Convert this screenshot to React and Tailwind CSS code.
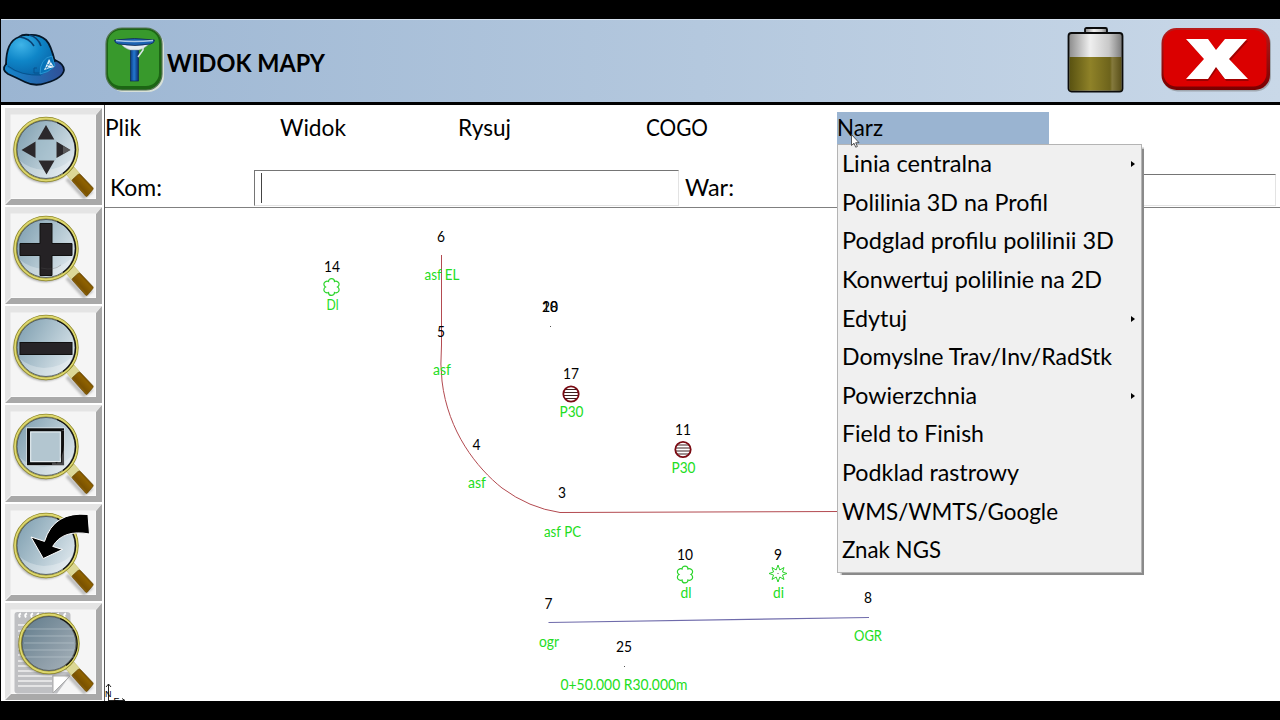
import React from 'react';

const menuItems = [
  { label: 'Linia centralna', width: 150, sub: true },
  { label: 'Polilinia 3D na Profil', width: 206 },
  { label: 'Podglad profilu polilinii 3D', width: 272 },
  { label: 'Konwertuj polilinie na 2D', width: 260 },
  { label: 'Edytuj', width: 65, sub: true },
  { label: 'Domyslne Trav/Inv/RadStk', width: 270 },
  { label: 'Powierzchnia', width: 135, sub: true },
  { label: 'Field to Finish', width: 142 },
  { label: 'Podklad rastrowy', width: 177 },
  { label: 'WMS/WMTS/Google', width: 216 },
  { label: 'Znak NGS', width: 99 },
];

const points = [
  { x: 441, y: 242, text: '6', w: 8 },
  { x: 332, y: 272, text: '14', w: 16 },
  { x: 441, y: 337, text: '5', w: 8 },
  { x: 550, y: 312, text: '20', w: 16 },
  { x: 550, y: 312, text: '18', w: 16 },
  { x: 571, y: 379, text: '17', w: 16 },
  { x: 683, y: 435, text: '11', w: 16 },
  { x: 476.5, y: 450, text: '4', w: 8 },
  { x: 562, y: 498, text: '3', w: 8 },
  { x: 685, y: 560, text: '10', w: 16 },
  { x: 778, y: 560, text: '9', w: 8 },
  { x: 548.5, y: 609, text: '7', w: 8 },
  { x: 868, y: 603, text: '8', w: 8 },
  { x: 624, y: 652, text: '25', w: 16 },
];

const codes = [
  { x: 442, y: 280, text: 'asf EL', w: 35 },
  { x: 332.5, y: 310, text: 'Dl', w: 12 },
  { x: 442, y: 375, text: 'asf', w: 18 },
  { x: 571.5, y: 417, text: 'P30', w: 24 },
  { x: 683.5, y: 473, text: 'P30', w: 24 },
  { x: 477, y: 488, text: 'asf', w: 18 },
  { x: 562.5, y: 537, text: 'asf PC', w: 37 },
  { x: 686, y: 598, text: 'dl', w: 11 },
  { x: 778.5, y: 598, text: 'di', w: 11 },
  { x: 549, y: 647, text: 'ogr', w: 20 },
  { x: 868, y: 641, text: 'OGR', w: 28 },
  { x: 624, y: 690, text: '0+50.000 R30.000m', w: 127 },
];

// Text stretched to a fixed width
function Label({ text, width, size = 24, bold = false }) {
  return (
    <svg className="block overflow-visible" width={width} height="32">
      <text x="0" y="24" fontSize={size} fontWeight={bold ? 700 : 400} textLength={width} lengthAdjust="spacingAndGlyphs">
        {text}
      </text>
    </svg>
  );
}

function Defs() {
  return (
    <svg className="absolute" width="0" height="0">
      <defs>
        <linearGradient id="lens" x1="0" y1="0.2" x2="1" y2="0.8">
          <stop offset="0" stopColor="#7f9fb0" />
          <stop offset="0.5" stopColor="#b0c5d0" />
          <stop offset="1" stopColor="#e3ebf0" />
        </linearGradient>
        <linearGradient id="lensDark" x1="0" y1="0" x2="1" y2="1">
          <stop offset="0" stopColor="#5e7a8a" />
          <stop offset="0.6" stopColor="#8d9da8" />
          <stop offset="1" stopColor="#a9b5bd" />
        </linearGradient>
        <linearGradient id="handle" x1="0.2" y1="0.8" x2="0.8" y2="0.2">
          <stop offset="0" stopColor="#a87b16" />
          <stop offset="0.35" stopColor="#7a5200" />
          <stop offset="0.7" stopColor="#8f6200" />
          <stop offset="1" stopColor="#4d3100" />
        </linearGradient>
        <filter id="soft" x="-20%" y="-20%" width="140%" height="140%">
          <feGaussianBlur stdDeviation="1.3" />
        </filter>
      </defs>
    </svg>
  );
}

function Lens({ cx = 41, cy = 42.5, r = 30, fill = 'url(#lens)', children }) {
  return (
    <g>
      <circle cx={cx - 1} cy={cy + 2} r={r + 1.5} fill="#555" opacity="0.55" filter="url(#soft)" />
      <path d="M62 72l17 18 8-6" fill="none" stroke="#999" strokeWidth="4" opacity="0.6" filter="url(#soft)" />
      <path d="M61 67l8-7 6 7-8 7z" fill="#dcd896" stroke="#c2ba62" strokeWidth="0.6" />
      <circle cx={cx} cy={cy} r={r + 1} fill={fill} stroke="#8d8727" strokeWidth="3.4" />
      <circle cx={cx} cy={cy} r={r + 1} fill="none" stroke="#ddd76f" strokeWidth="1.8" />
      <circle cx={cx} cy={cy} r={r - 1} fill="none" stroke="#4b5153" strokeWidth="0.8" />
      <path d={`M${cx + 11} ${cy - r + 3}A${r - 1} ${r - 1} 0 0 1 ${cx + 17} ${cy + r - 6}`} fill="none" stroke="#111" strokeWidth="1.3" />
      {children}
      <path d="M67.500 72.500l5.500-5q1.500-1 2.500 0L87.800 80.500q1 1.200 0 2.200l-5.300 6.300q-1 1-2 0L67.500 74.500q-.8-1 0-2z" fill="url(#handle)" stroke="#5f3f00" strokeWidth="0.6" />
    </g>
  );
}

function Shine() {
  return <path d="M14 53q10 9 25 10 16 0 28-11-4 12-15 17-21 5-32-7z" fill="#fff" opacity="0.28" />;
}

function ToolButton({ children }) {
  return (
    <button className="block h-[99.200px] w-[98px] shrink-0">
      <svg className="block" width="98" height="99.2" viewBox="0 0 98 99.2">
        <rect width="98" height="99.2" fill="#fff" />
        <path d="M0 1h97l-6.500 7H6v83l-6 6z" fill="#e4e4e4" />
        <path d="M97 1v97H0l6-6h85V8z" fill="#a9a9a9" />
        <rect x="5.500" y="7.500" width="85" height="84" fill="#f5f5f5" />
        {children}
      </svg>
    </button>
  );
}

function PanTool() {
  return (
    <ToolButton>
      <Lens>
        <Shine />
        <rect x="31" y="33" width="20" height="20" fill="#9fbccb" opacity="0.55" />
        <path d="M41 18l8.300 14.500H32.700zM41.500 67.500l8-14h-16zM16.500 43l14-8.500v16.500zM65.500 43l-14-8.500v16.500z" fill="#2b282b" />
        <path d="M58 39l7.500 4-7.500 4z" fill="#777" opacity="0.6" />
      </Lens>
    </ToolButton>
  );
}

function ZoomInTool() {
  return (
    <ToolButton>
      <Lens>
        <Shine />
        <path d="M35 17.500h12v20h20v12h-20v20h-12v-20h-20v-12h20z" fill="#252225" stroke="#101010" />
        <path d="M36 62q13 3 20-3" stroke="#555" fill="none" opacity="0.3" />
      </Lens>
    </ToolButton>
  );
}

function ZoomOutTool() {
  return (
    <ToolButton>
      <Lens>
        <Shine />
        <rect x="15" y="37.500" width="52" height="12" fill="#272427" stroke="#111" />
      </Lens>
    </ToolButton>
  );
}

function WindowTool() {
  return (
    <ToolButton>
      <Lens>
        <Shine />
        <rect x="23.500" y="25.800" width="34" height="34" fill="#a9bfca" stroke="#0c0c0c" strokeWidth="3.200" />
        <path d="M47 60h11V26" fill="none" stroke="#56585a" strokeWidth="2.500" opacity="0.8" />
        <path d="M58 27v14q0 10-7 18" fill="none" stroke="#0c0c0c" strokeWidth="1.800" />
        <rect x="25.700" y="28" width="29.600" height="29.600" fill="#b3c6d0" stroke="#e9f0f3" strokeWidth="1" />
        <rect x="21.500" y="23.800" width="38" height="38" fill="none" stroke="#e1e8eb" strokeWidth="0.700" />
      </Lens>
    </ToolButton>
  );
}

function PreviousTool() {
  return (
    <ToolButton>
      <Lens>
        <Shine />
        <path d="M83 11.500L84.500 31Q58 26 47.700 43.400L57.500 46.500 38.300 55.500 26 34l13.500 4.400Q49 8 83 11.500z" fill="#000" stroke="#fff" strokeWidth="1" />
      </Lens>
    </ToolButton>
  );
}

function NotesTool() {
  const lines = [23, 29, 35, 41, 47, 53, 59, 64, 69, 74, 79, 84];
  return (
    <ToolButton>
      <path d="M9.500 13q0-3 3-3h49q4 0 4 3v60L52 91.500H12.500q-3 0-3-3z" fill="#bfc0c3" />
      {lines.map((y) => (
        <path key={y} d={`M13 ${y}h${y > 71 ? 34 : 50}`} stroke="#f0f0f0" strokeWidth="1.400" />
      ))}
      {[15, 21, 27, 33, 39, 46, 53, 60].map((x) => (
        <path key={x} d={`M${x} 15.500q-2-3 1-4`} stroke="#fff" strokeWidth="2" fill="none" />
      ))}
      <path d="M48 74h17L48 91z" fill="#fff" stroke="#aaa" />
      <Lens cx={44} cy={41.500} r={28} fill="url(#lensDark)">
        {[27, 34, 41, 48, 55].map((y) => (
          <path key={y} d={`M19 ${y}h50`} stroke="#c4d0d6" strokeWidth="1" opacity="0.5" />
        ))}
      </Lens>
    </ToolButton>
  );
}

function HelmetIcon() {
  return (
    <svg className="block" width="66" height="58" viewBox="0 0 66 58">
      <defs>
        <radialGradient id="dome" cx="0.3" cy="0.25" r="0.8">
          <stop offset="0" stopColor="#3fb4e8" />
          <stop offset="0.5" stopColor="#0f86c8" />
          <stop offset="1" stopColor="#0964a8" />
        </radialGradient>
        <linearGradient id="brim" x1="0" y1="0" x2="1" y2="0">
          <stop offset="0" stopColor="#1587cc" />
          <stop offset="1" stopColor="#304f97" />
        </linearGradient>
      </defs>
      <path d="M4 31q-5 6 2 10 9 4 17 8 10 5 21 1 17-5 18-13 0-6-9-10z" fill="url(#brim)" stroke="#051525" strokeWidth="1.800" />
      <path d="M5 34C3 18 8 7 17 4q4-3 10-2 10-1 17 5 5 5 9 24-7 5-13 11Q20 44 5 34z" fill="url(#dome)" />
      <path d="M4 32C4 17 8 7 17 4q4-3 10-2 10-1 17 5 5 5 9 22" fill="none" stroke="#061728" strokeWidth="1.800" />
      <path d="M18 4q9 1 14 9M27 2q9 2 12 11" fill="none" stroke="#0a3f70" strokeWidth="1.600" />
      <path d="M6 33q13 10 33 9M35 35h-3v5h7" fill="none" stroke="#08538d" strokeWidth="1" />
      <path d="M38 41q0-16 12-18l3 10q-7 7-15 8z" fill="#0873b8" stroke="#35a5dc" strokeWidth="0.700" />
      <path d="M42 37l5-11 5 8z" fill="#eaf4fb" />
      <path d="M43 34l7 2M44.500 31l6 2M49 28l-5 8" stroke="#0873b8" strokeWidth="0.700" />
    </svg>
  );
}

function ReceiverIcon() {
  return (
    <svg className="block" width="60" height="66" viewBox="0 0 60 66">
      <defs>
        <linearGradient id="pole" x1="0" y1="0" x2="1" y2="0">
          <stop offset="0" stopColor="#0b3b86" />
          <stop offset="0.45" stopColor="#2478cf" />
          <stop offset="1" stopColor="#0a2f70" />
        </linearGradient>
      </defs>
      <rect x="3" y="3" width="56" height="62" rx="16" fill="#e5ead8" opacity="0.8" />
      <rect x="1" y="1" width="56" height="62" rx="16" fill="#1c6514" stroke="#547551" strokeWidth="1.200" />
      <rect x="3" y="3" width="51" height="56" rx="13" fill="#38992c" />
      <rect x="25.500" y="21" width="8" height="33" fill="url(#pole)" stroke="#112958" strokeWidth="0.700" />
      <path d="M16 17h28q-5 5-10 6h-9q-6-2-9-6z" fill="#e4ebf0" stroke="#7e939d" strokeWidth="0.500" />
      <path d="M9.500 13q20-3 40 0 0 3-4 4-15 3-32 0-4-1-4-4z" fill="#1c62b2" stroke="#102850" strokeWidth="0.800" />
      <path d="M11 13.500q18 2 37 0" stroke="#a9c7e5" fill="none" strokeWidth="1.300" />
      <path d="M38 19v4l-5 7" stroke="#dce6ed" fill="none" strokeWidth="1.500" />
    </svg>
  );
}

function BatteryIcon() {
  return (
    <svg className="block" width="58" height="67" viewBox="0 0 58 67">
      <defs>
        <linearGradient id="steel" x1="0" y1="0" x2="1" y2="0">
          <stop offset="0" stopColor="#8a8a8a" />
          <stop offset="0.4" stopColor="#efefef" />
          <stop offset="0.75" stopColor="#c8c8c8" />
          <stop offset="0.85" stopColor="#a9a9a9" />
          <stop offset="1" stopColor="#777" />
        </linearGradient>
        <linearGradient id="charge" x1="0" y1="0" x2="1" y2="0">
          <stop offset="0" stopColor="#595211" />
          <stop offset="0.4" stopColor="#8f8228" />
          <stop offset="0.78" stopColor="#6d631b" />
          <stop offset="0.82" stopColor="#857a3d" />
          <stop offset="1" stopColor="#5a501a" />
        </linearGradient>
      </defs>
      <rect x="18" y="1" width="22" height="5" rx="1.500" fill="url(#steel)" stroke="#0b0b0b" strokeWidth="1.800" />
      <rect x="1.500" y="6" width="54" height="58.500" rx="3" fill="url(#steel)" stroke="#0b0b0b" strokeWidth="1.800" />
      <path d="M2.500 30h52v33.500h-52z" fill="url(#charge)" />
    </svg>
  );
}

function CloseIcon() {
  return (
    <svg className="block" width="112" height="66" viewBox="0 0 112 66">
      <defs>
        <linearGradient id="redEdge" x1="0" y1="0" x2="0" y2="1">
          <stop offset="0" stopColor="#b81b1b" />
          <stop offset="1" stopColor="#790000" />
        </linearGradient>
      </defs>
      <rect x="1.500" y="2" width="108.500" height="62.500" rx="15" fill="#777" opacity="0.5" />
      <rect x="0.500" y="1" width="108.500" height="62" rx="15" fill="url(#redEdge)" />
      <rect x="2.500" y="3" width="103" height="56.500" rx="13" fill="#db0000" />
      <path d="M26 14h22l8 11 9-11h22L69 34l19 20H65l-9-12-9 12H25l20-21z" fill="#700" opacity="0.6" />
      <path d="M25 12h22l8 11 9-11h22L68 32l19 20H64L55 40l-8 12H25l18-20z" fill="#fff" />
    </svg>
  );
}

function Header() {
  return (
    <header className="flex h-[86px] shrink-0 items-start border-t border-b-3 border-t-[#d5e1ee] border-b-black bg-linear-to-r from-[#9bb5d2] to-[#c9d8e8] pr-[7px] pl-px">
      <div className="pt-[13px]"><HelmetIcon /></div>
      <div className="pt-[7px] pl-[37px]"><ReceiverIcon /></div>
      <div className="pt-[28px] pl-[2px]">
        <Label text="WIDOK MAPY" width={158} size={25.500} bold />
      </div>
      <div className="ml-auto pt-[7px]"><BatteryIcon /></div>
      <div className="pt-[7px] pl-[36px]"><CloseIcon /></div>
    </header>
  );
}

function MenuPopup() {
  return (
    <div className="absolute top-[32px] left-0 z-20 h-[429px] w-[305px] border border-[#b4b4b4] bg-[#f0f0f0] shadow-[2px_2px_1px_-0.5px_#8a8a8a]">
      {menuItems.map((item) => (
        <div key={item.label} className="flex h-[38.600px] items-center justify-between pr-[6px] pl-[3.500px]">
          <Label text={item.label} width={item.width} />
          {item.sub && (
            <svg width="4" height="6" viewBox="0 0 4 6"><path d="M0 0l4 3-4 3z" /></svg>
          )}
        </div>
      ))}
    </div>
  );
}

function MenuBar() {
  return (
    <nav className="flex h-[62px] items-start pt-[7px]">
      <div className="w-[175px]"><Label text="Plik" width={36} /></div>
      <div className="w-[178px]"><Label text="Widok" width={66} /></div>
      <div className="w-[188px]"><Label text="Rysuj" width={53} /></div>
      <div className="w-[191px]"><Label text="COGO" width={62} /></div>
      <div className="relative h-[33px] w-[212px] bg-[#9ab4d1]">
        <Label text="Narz" width={46} />
        <svg className="absolute top-[22px] left-[14px] z-30" width="9" height="14" viewBox="0 0 9 14">
          <path d="M.5.5v11l2.500-2.300 1.700 4 1.700-.700-1.700-3.800h3.300z" fill="#fff" stroke="#333" strokeWidth="0.800" />
        </svg>
        <MenuPopup />
      </div>
    </nav>
  );
}

function CommandRow() {
  return (
    <div className="flex h-[41px] items-start border-b border-[#808080] pl-[5px]">
      <div className="w-[143.500px] pt-[5px]"><Label text="Kom:" width={52} /></div>
      <div className="mt-[3px] h-[36px] w-[425px] border border-t-[#757575] border-r-[#e3e3e3] border-b-[#e3e3e3] border-l-[#757575] pt-[2px] pl-[6px]">
        <div className="h-[30px] w-px bg-[#444]" />
      </div>
      <div className="w-[165px] pt-[5px] pl-[6.500px]"><Label text="War:" width={49} /></div>
      <div className="mt-[7px] mr-1 h-[32px] flex-1 border border-t-[#757575] border-r-[#e3e3e3] border-b-[#e3e3e3] border-l-[#757575]" />
    </div>
  );
}

function Tree({ x, y }) {
  return (
    <path
      transform={`translate(${x} ${y})`}
      d="M6 0A3 3 0 1 0 3-5.400A3 3 0 1 0-3-5.400A3 3 0 1 0-6 0A3 3 0 1 0-3 5.400A3 3 0 1 0 3 5.400A3 3 0 1 0 6 0z"
      fill="none"
      stroke="#2bd42b"
      strokeWidth="1.200"
    />
  );
}

function Manhole({ x, y }) {
  return (
    <g transform={`translate(${x} ${y})`}>
      <path d="M-6-4.500H6M-7-1.500H7M-7 1.500H7M-6 4.500H6" stroke="#3d2020" strokeWidth="1" />
      <circle r="7.700" fill="none" stroke="#7a0a12" strokeWidth="1.800" />
    </g>
  );
}

function MapCanvas() {
  return (
    <svg className="block" width="1175" height="493" viewBox="105 208 1175 493">
      <path d="M441.500 255V345Q440 365 442 381C448 432 477 468 502 488Q529 508 560 512.500L840 511.500" fill="none" stroke="#b34a50" strokeWidth="1" />
      <path d="M548.500 622.500L869 617.500" stroke="#6f6bab" strokeWidth="1.100" />
      {points.map((p) => (
        <text key={p.text} x={p.x - p.w / 2} y={p.y} fontSize="14.5" textLength={p.w} lengthAdjust="spacingAndGlyphs">{p.text}</text>
      ))}
      {codes.map((c, i) => (
        <text key={i} x={c.x - c.w / 2} y={c.y} fontSize="14.5" fill="#22dd22" textLength={c.w} lengthAdjust="spacingAndGlyphs">{c.text}</text>
      ))}
      <Tree x={331.500} y={287} />
      <Tree x={685} y={574.500} />
      <path transform="translate(778 573.500)" d="M0-8.500l1.800 5 4.200-2.500-1.500 4.500L9 0 4.500 1.500 6 6 1.800 3.500 0 8.500-1.800 3.500-6 6-4.500 1.500-9 0l4.500-1.500L-6-6l4.200 2.500z" fill="none" stroke="#2bd42b" />
      <Manhole x={571} y={394} />
      <Manhole x={683} y={449.500} />
      <path d="M550 326h1v1h-1zM624 666h1v1h-1zM777.500 573h1v1h-1z" fill="#555" />
      <path d="M108.500 701V684M106 687l2.500-3 2.500 3M108 700.500h17M122 698.500l3 2-3 2" fill="none" stroke="#222" />
      <g className="font-['Liberation_Sans',sans-serif]" fontSize="9">
        <text x="105" y="696.500">N</text>
        <text x="113.500" y="703.500">E</text>
      </g>
    </svg>
  );
}

export default function App() {
  return (
    <div className="flex h-[720px] w-[1280px] flex-col overflow-hidden bg-black pt-[19px] pb-[19px] pl-px font-['Lato',sans-serif] text-black">
      <Defs />
      <Header />
      <div className="flex h-[596px] bg-white">
        <aside className="flex w-[104px] shrink-0 flex-col overflow-hidden border-r border-[#555] pt-[1.500px] pl-[3.500px]">
          <PanTool />
          <ZoomInTool />
          <ZoomOutTool />
          <WindowTool />
          <PreviousTool />
          <NotesTool />
        </aside>
        <main className="min-w-0 flex-1">
          <MenuBar />
          <CommandRow />
          <MapCanvas />
        </main>
      </div>
    </div>
  );
}
